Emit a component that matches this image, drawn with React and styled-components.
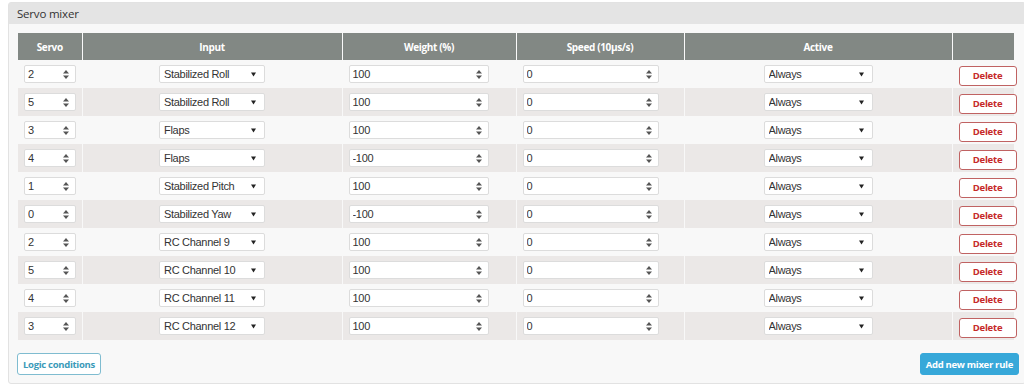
import React from "react"
import styled, { createGlobalStyle } from "styled-components"

const GlobalStyle = createGlobalStyle`
  body {
    margin: 0;
    background: #ffffff;
    font-family: "Open Sans", "Liberation Sans", sans-serif;
  }
`

const Page = styled.div`
  padding: 2px 0 0 8px;
  width: 1024px;
  box-sizing: border-box;
  overflow: hidden;
`

const Panel = styled.div`
  width: 1018px;
  border: 1px solid #e2e2e2;
  border-radius: 3px;
  background: #f8f8f8;
  box-sizing: border-box;
`

const PanelHeader = styled.div`
  height: 21px;
  background: #e4e4e4;
  font-size: 11.5px;
  letter-spacing: -0.2px;
  color: #333;
  line-height: 21px;
  padding-left: 8px;
`

const PanelBody = styled.div`
  padding: 9px 9px 8px 9px;
`

const Table = styled.table`
  width: 996px;
  table-layout: fixed;
  border-collapse: collapse;
`

const Th = styled.th`
  height: 27px;
  background: #828884;
  color: #fff;
  font-size: 10px;
  letter-spacing: -0.35px;
  font-weight: 700;
  border-left: 1px solid #fafafa;
  padding: 0;
  &:first-child {
    border-left: none;
  }
`

const Row = styled.tr`
  background: ${p => (p.$striped ? "#ebe8e7" : "#f8f8f8")};
`

const Td = styled.td`
  height: 28px;
  padding: 0 6px;
  vertical-align: middle;
  text-align: ${p => p.$align || "left"};
  border-left: 1px solid #f8f8f8;
  box-sizing: border-box;
  &:first-child {
    border-left: none;
  }
`

const NumberBox = styled.div`
  display: flex;
  align-items: center;
  width: ${p => p.$width}px;
  height: 18px;
  background: #fff;
  border: 1px solid #dcdcdc;
  border-radius: 2px;
  box-sizing: border-box;
  padding: 0 6px 0 3px;
`

const NumberField = styled.input`
  flex: 1;
  min-width: 0;
  border: none;
  outline: none;
  background: transparent;
  padding: 0;
  font-family: "Liberation Sans", Arial, sans-serif;
  font-size: 11px;
  letter-spacing: -0.3px;
  color: #333;
`

const SelectWrap = styled.div`
  position: relative;
  width: ${p => p.$width}px;
  height: 18px;
  margin: 0 auto;
`

const Select = styled.select`
  display: block;
  appearance: none;
  width: 100%;
  height: 18px;
  background: #fff;
  border: 1px solid #dcdcdc;
  border-radius: 2px;
  padding: 0 0 0 4px;
  font-family: "Liberation Sans", Arial, sans-serif;
  font-size: 11px;
  letter-spacing: -0.3px;
  color: #333;
  outline: none;
`

const Caret = styled.svg`
  position: absolute;
  right: 9px;
  top: 7px;
  pointer-events: none;
`

const DeleteButton = styled.button`
  width: 58px;
  height: 20px;
  margin-right: -2px;
  background: #fff;
  border: 1px solid #c06262;
  border-radius: 3px;
  color: #c62a2a;
  font-family: "Open Sans", sans-serif;
  font-size: 9.5px;
  letter-spacing: -0.2px;
  font-weight: 700;
  padding: 0;
`

const Footer = styled.div`
  display: flex;
  justify-content: space-between;
  align-items: center;
  margin-top: 13px;
`

const Button = styled.button`
  height: 22px;
  padding: 0 5px;
  border-radius: 3px;
  font-family: "Open Sans", sans-serif;
  font-size: 9.5px;
  letter-spacing: -0.3px;
  font-weight: 700;
  border: 1px solid ${p => (p.$primary ? "#37a8d9" : "#7fbcd0")};
  background: ${p => (p.$primary ? "#37a8d9" : "#ffffff")};
  color: ${p => (p.$primary ? "#ffffff" : "#3b9ab9")};
  margin-left: ${p => (p.$primary ? "0" : "-1px")};
  margin-right: ${p => (p.$primary ? "-3px" : "0")};
`

const Spinner = () => (
  <svg width="6" height="9" viewBox="0 0 6 9">
    <path d="M3 0 L6 3.5 L0 3.5 Z" fill="#555" />
    <path d="M3 9 L6 5.5 L0 5.5 Z" fill="#555" />
  </svg>
)

const NumberInput = ({ value, width }) => (
  <NumberBox $width={width}>
    <NumberField type="text" defaultValue={value} readOnly />
    <Spinner />
  </NumberBox>
)

const Dropdown = ({ value, width, options }) => (
  <SelectWrap $width={width}>
    <Select defaultValue={value}>
      {options.map(o => (
        <option key={o}>{o}</option>
      ))}
    </Select>
    <Caret width="5" height="5" viewBox="0 0 5 5">
      <path d="M0 0.5 L5 0.5 L2.5 4.5 Z" fill="#222" />
    </Caret>
  </SelectWrap>
)

const inputs = [
  "Stabilized Roll",
  "Stabilized Pitch",
  "Stabilized Yaw",
  "Flaps",
  "RC Channel 9",
  "RC Channel 10",
  "RC Channel 11",
  "RC Channel 12",
]

const rules = [
  { servo: 2, input: "Stabilized Roll", weight: 100 },
  { servo: 5, input: "Stabilized Roll", weight: 100 },
  { servo: 3, input: "Flaps", weight: 100 },
  { servo: 4, input: "Flaps", weight: -100 },
  { servo: 1, input: "Stabilized Pitch", weight: 100 },
  { servo: 0, input: "Stabilized Yaw", weight: -100 },
  { servo: 2, input: "RC Channel 9", weight: 100 },
  { servo: 5, input: "RC Channel 10", weight: 100 },
  { servo: 4, input: "RC Channel 11", weight: 100 },
  { servo: 3, input: "RC Channel 12", weight: 100 },
]

const App = () => (
  <Page>
    <GlobalStyle />
    <Panel>
      <PanelHeader>Servo mixer</PanelHeader>
      <PanelBody>
        <Table>
          <colgroup>
            <col style={{ width: 64 }} />
            <col style={{ width: 260 }} />
            <col style={{ width: 174 }} />
            <col style={{ width: 168 }} />
            <col style={{ width: 268 }} />
            <col style={{ width: 62 }} />
          </colgroup>
          <thead>
            <tr>
              <Th>Servo</Th>
              <Th>Input</Th>
              <Th>Weight (%)</Th>
              <Th>Speed (10µs/s)</Th>
              <Th>Active</Th>
              <Th />
            </tr>
          </thead>
          <tbody>
            {rules.map((r, i) => (
              <Row key={i} $striped={i % 2 === 1}>
                <Td>
                  <NumberInput value={r.servo} width={52} />
                </Td>
                <Td>
                  <Dropdown value={r.input} width={106} options={inputs} />
                </Td>
                <Td>
                  <NumberInput value={r.weight} width={140} />
                </Td>
                <Td>
                  <NumberInput value={0} width={136} />
                </Td>
                <Td>
                  <Dropdown value="Always" width={109} options={["Always"]} />
                </Td>
                <Td $align="right">
                  <DeleteButton>Delete</DeleteButton>
                </Td>
              </Row>
            ))}
          </tbody>
        </Table>
        <Footer>
          <Button>Logic conditions</Button>
          <Button $primary>Add new mixer rule</Button>
        </Footer>
      </PanelBody>
    </Panel>
  </Page>
)

export default App
